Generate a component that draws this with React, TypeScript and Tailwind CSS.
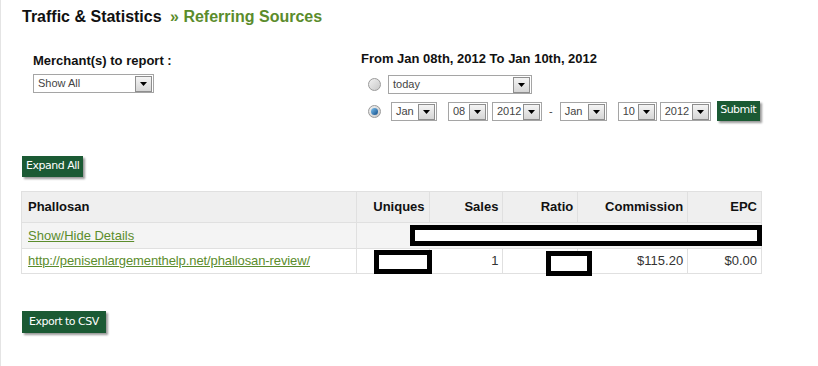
import React from "react"

function Arrow() {
  return (
    <span className="flex h-[16px] w-[17px] items-center justify-center border border-[#8e8e8e] bg-gradient-to-b from-[#f4f4f4] to-[#d6d6d6]">
      <svg width="7" height="4" viewBox="0 0 7 4">
        <path d="M0 0h7L3.5 4z" fill="#000" />
      </svg>
    </span>
  )
}

function Select({ value, w }: { value: string; w: string }) {
  return (
    <div className={`flex h-[19px] items-center justify-between border border-[#a5a5a5] bg-white pl-[4px] pr-[1px] ${w}`}>
      <span className="text-[11px] text-[#444] font-['Liberation_Sans',Arial,sans-serif]">{value}</span>
      <Arrow />
    </div>
  )
}

function Radio({ checked }: { checked?: boolean }) {
  return (
    <span className="flex h-[13px] w-[13px] items-center justify-center rounded-full border border-[#9a9a9a] bg-gradient-to-br from-[#f2f2f2] to-[#c8c8c8]">
      {checked && <span className="h-[7px] w-[7px] rounded-full bg-gradient-to-br from-[#7ec3f0] to-[#0b4d8a]" />}
    </span>
  )
}

function GreenButton({ children, cls }: { children: React.ReactNode; cls: string }) {
  return (
    <button className={`bg-[#1b5a34] text-white text-[11px] font-['DejaVu_Sans',sans-serif] tracking-[-0.5px] shadow-[2px_2px_2px_#9a9a9a] ${cls}`}>
      {children}
    </button>
  )
}

export default function App() {
  return (
    <div className="h-[366px] w-[818px] border-l border-[#e4e4e4] bg-white font-['Liberation_Sans',Arial,sans-serif] text-[#111]">
      <div className="pl-[21px] pt-[8px]">
        <h1 className="text-[16px] font-bold leading-[18px]">
          Traffic &amp; Statistics <span className="ml-[4px] text-[#5b8c2c]">» Referring Sources</span>
        </h1>

        <div className="mt-[27px] flex">
          <div className="ml-[11px] w-[328px]">
            <div className="text-[13px] font-bold leading-[15px]">Merchant(s) to report :</div>
            <div className="mt-[6px]">
              <Select value="Show All" w="w-[121px]" />
            </div>
          </div>
          <div>
            <div className="text-[13px] font-bold leading-[15px] -mt-[2px]">From Jan 08th, 2012 To Jan 10th, 2012</div>
            <div className="mt-[9px] flex items-center gap-[7px] pl-[7px]">
              <Radio />
              <Select value="today" w="w-[144px]" />
            </div>
            <div className="mt-[8px] flex items-center pl-[7px]">
              <Radio checked />
              <div className="ml-[10px] flex items-center">
                <Select value="Jan" w="w-[46px]" />
                <div className="ml-[11px]"><Select value="08" w="w-[40px]" /></div>
                <div className="ml-[4px]"><Select value="2012" w="w-[50px]" /></div>
                <span className="mx-[7px] text-[11px] text-[#444]">-</span>
                <Select value="Jan" w="w-[47px]" />
                <div className="ml-[11px]"><Select value="10" w="w-[39px]" /></div>
                <div className="ml-[3px]"><Select value="2012" w="w-[51px]" /></div>
                <GreenButton cls="ml-[6px] h-[20px] w-[43px] -mt-[2px]">Submit</GreenButton>
              </div>
            </div>
          </div>
        </div>

        <GreenButton cls="mt-[35px] h-[21px] px-[4px]">Expand All</GreenButton>

        <table className="mt-[14px] w-[741px] -ml-[1px] border-collapse text-[13px]">
          <colgroup>
            <col className="w-[335px]" />
            <col className="w-[73px]" />
            <col className="w-[74px]" />
            <col className="w-[75px]" />
            <col className="w-[110px]" />
            <col className="w-[74px]" />
          </colgroup>
          <thead>
            <tr className="h-[31px] bg-[#efefef] font-bold">
              <th className="border border-[#e0e0e0] px-[6px] text-left">Phallosan</th>
              <th className="border border-[#e0e0e0] px-[4px] text-right">Uniques</th>
              <th className="border border-[#e0e0e0] px-[4px] text-right">Sales</th>
              <th className="border border-[#e0e0e0] px-[4px] text-right">Ratio</th>
              <th className="border border-[#e0e0e0] px-[4px] text-right">Commission</th>
              <th className="border border-[#e0e0e0] px-[4px] text-right">EPC</th>
            </tr>
          </thead>
          <tbody>
            <tr className="h-[26px] bg-[#f4f4f4]">
              <td className="border border-[#e0e0e0] px-[6px]">
                <a className="text-[#5b8c2c] underline">Show/Hide Details</a>
              </td>
              <td className="relative border border-[#e0e0e0]" colSpan={5}>
                <span className="absolute left-[53px] top-[2px] h-[21px] w-[352px] border-[5px] border-black bg-white" />
              </td>
            </tr>
            <tr className="h-[25px] bg-white text-[#333]">
              <td className="border border-[#e0e0e0] px-[6px]">
                <a className="text-[#5b8c2c] underline text-[13px] tracking-[-0.1px]">http://penisenlargementhelp.net/phallosan-review/</a>
              </td>
              <td className="relative border border-[#e0e0e0]">
                <span className="absolute left-[17px] top-[1px] h-[24px] w-[58px] border-[5px] border-black bg-white" />
              </td>
              <td className="border border-[#e0e0e0] px-[4px] text-right">1</td>
              <td className="relative border border-[#e0e0e0]">
                <span className="absolute left-[43px] top-[2px] h-[25px] w-[46px] border-[5px] border-black bg-white" />
              </td>
              <td className="border border-[#e0e0e0] px-[4px] text-right">$115.20</td>
              <td className="border border-[#e0e0e0] px-[4px] text-right">$0.00</td>
            </tr>
          </tbody>
        </table>

        <GreenButton cls="mt-[37px] h-[22px] px-[7px] text-[11.5px]">Export to CSV</GreenButton>
      </div>
    </div>
  )
}
